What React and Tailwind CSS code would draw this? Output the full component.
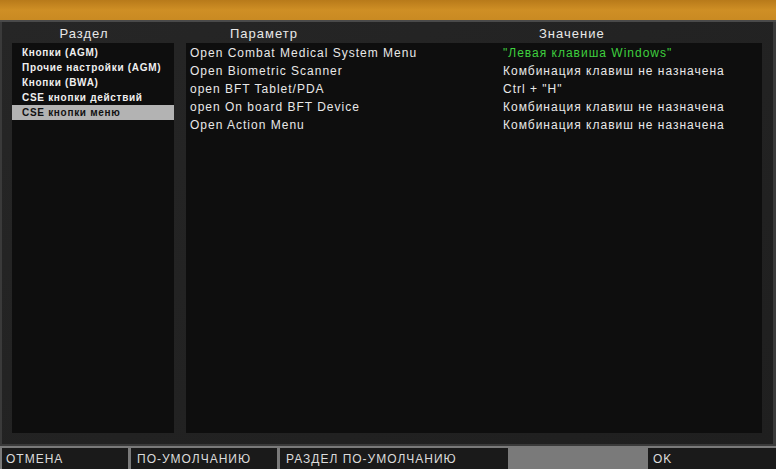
const sections = [
  "Кнопки (AGM)",
  "Прочие настройки (AGM)",
  "Кнопки (BWA)",
  "CSE кнопки действий",
  "CSE кнопки меню",
];

const binds = [
  { name: "Open Combat Medical System Menu", value: "\"Левая клавиша Windows\"", green: true },
  { name: "Open Biometric Scanner", value: "Комбинация клавиш не назначена" },
  { name: "open BFT Tablet/PDA", value: "Ctrl + \"H\"" },
  { name: "open On board BFT Device", value: "Комбинация клавиш не назначена" },
  { name: "Open Action Menu", value: "Комбинация клавиш не назначена" },
];

export default function App() {
  const font = { fontFamily: "'Liberation Sans', 'DejaVu Sans', sans-serif" };
  return (
    <div
      className="w-[776px] h-[469px] bg-[#7a7a7a] flex flex-col overflow-hidden text-[#e8e8e8]"
      style={font}
    >
      {/* title bar */}
      <div className="h-[20px] bg-gradient-to-b from-[#b87a1a] via-[#cf8f25] to-[#c98a22]" />
      <div className="h-[2px] bg-[#4a4a4a]" />

      {/* body */}
      <div className="flex-1 flex bg-[#3a3a3a] pl-[2px] pr-[3px]">
        <div className="flex-1 bg-gradient-to-br from-[#262626] to-[#1f1f1f] flex flex-col pl-[10px] pr-[11px] pt-[3px] pb-[11px]">
          {/* headers */}
          <div className="h-[18px] flex items-center text-[13px] tracking-[1px] whitespace-nowrap">
            <div className="w-[162px] pr-[18px] text-center">Раздел</div>
            <div className="w-[12px]" />
            <div className="pl-[44px] w-[317px]">Параметр</div>
            <div className="pl-[36px]">Значение</div>
          </div>

          <div className="flex-1 flex gap-[12px]">
            {/* sections list */}
            <div className="w-[162px] bg-[#0e0e0e] pt-[2px] flex flex-col">
              {sections.map((s, i) => (
                <div
                  key={s}
                  className={
                    "h-[15px] leading-[15px] pl-[10px] text-[10px] font-bold tracking-[0.7px] whitespace-nowrap " +
                    (i === 4 ? "bg-[#b3b3b3] text-[#111]" : "text-[#f0f0f0]")
                  }
                >
                  {s}
                </div>
              ))}
            </div>

            {/* bindings */}
            <div className="flex-1 bg-[#0e0e0e] pt-[1px]">
              {binds.map((b) => (
                <div key={b.name} className="h-[18px] leading-[18px] flex text-[12px] tracking-[1px] whitespace-nowrap">
                  <div className="w-[317px] pl-[4px]">{b.name}</div>
                  <div className={b.green ? "text-[#3ed03e]" : ""}>{b.value}</div>
                </div>
              ))}
            </div>
          </div>
        </div>
      </div>

      {/* bottom buttons */}
      <div className="h-[2px] bg-[#3a3a3a]" />
      <div className="h-[2px] bg-[#7a7a7a]" />
      <div className="h-[21px] flex text-[12px] tracking-[1px] text-[#dcdcdc] pl-[2px] whitespace-nowrap">
        <div className="w-[126px] bg-[#1a1a1a] pl-[4px] leading-[23px]">ОТМЕНА</div>
        <div className="w-[3px]" />
        <div className="w-[146px] bg-[#1a1a1a] pl-[6px] leading-[23px]">ПО-УМОЛЧАНИЮ</div>
        <div className="w-[3px]" />
        <div className="w-[228px] bg-[#1a1a1a] pl-[6px] leading-[23px]">РАЗДЕЛ ПО-УМОЛЧАНИЮ</div>
        <div className="w-[140px]" />
        <div className="flex-1 bg-[#1a1a1a] pl-[5px] leading-[23px]">OK</div>
      </div>
    </div>
  );
}
